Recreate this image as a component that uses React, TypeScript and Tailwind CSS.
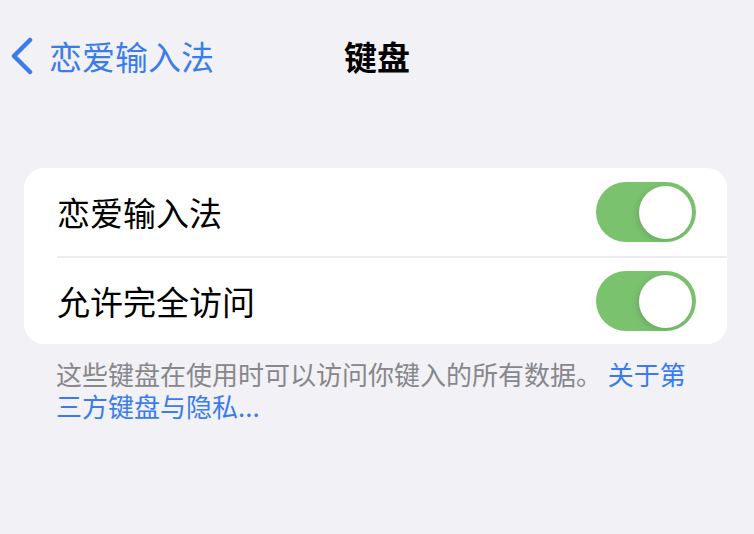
import React, { useState } from 'react';

const font = { fontFamily: '"Noto Sans CJK SC", "Noto Sans", sans-serif' };

const Toggle = ({ on, onChange }: { on: boolean; onChange: () => void }) => (
  <button
    onClick={onChange}
    className={`relative flex h-[60px] w-[100px] shrink-0 items-center rounded-full px-[4px] ${
      on ? 'justify-end bg-[#7bc26f]' : 'justify-start bg-[#e4e4e9]'
    }`}
  >
    <span className="block h-[53px] w-[53px] rounded-full bg-white shadow-[-2px_2px_6px_rgba(0,0,0,0.12)]" />
  </button>
);

const App = () => {
  const [enabled, setEnabled] = useState(true);
  const [fullAccess, setFullAccess] = useState(true);

  return (
    <div className="h-[534px] w-[754px] overflow-hidden bg-[#f1f1f6]" style={font}>
      <div className="mt-[28px] grid h-[56px] grid-cols-[1fr_auto_1fr] items-center">
        <div className="flex items-center pl-[10px]">
          <svg width="24" height="38" viewBox="0 0 24 38" fill="none">
            <path
              d="M20 3 L4 19 L20 35"
              stroke="#3a7cec"
              strokeWidth="4.5"
              strokeLinecap="round"
              strokeLinejoin="round"
            />
          </svg>
          <span className="ml-[15px] text-[33px] leading-none text-[#3a7cec]">恋爱输入法</span>
        </div>
        <div className="text-[33px] font-bold leading-none text-black">键盘</div>
        <div />
      </div>

      <div className="ml-[24px] mt-[84px] w-[703px] rounded-[20px] bg-white">
        <div className="flex h-[88px] items-center justify-between pl-[33px] pr-[31px]">
          <span className="text-[33px] leading-none text-black">恋爱输入法</span>
          <Toggle on={enabled} onChange={() => setEnabled(!enabled)} />
        </div>
        <div className="ml-[33px] h-[2px] bg-[#ededf1]" />
        <div className="flex h-[86px] items-center justify-between pl-[33px] pr-[31px]">
          <span className="text-[33px] leading-none text-black">允许完全访问</span>
          <Toggle on={fullAccess} onChange={() => setFullAccess(!fullAccess)} />
        </div>
      </div>

      <p className="mt-[14px] pl-[56px] pr-[54px] text-[26px] leading-[32px] text-[#87878c]">
        这些键盘在使用时可以访问你键入的所有数据。 <span className="text-[#3a7cec]">关于第三方键盘与隐私...</span>
      </p>
    </div>
  );
};

export default App;
